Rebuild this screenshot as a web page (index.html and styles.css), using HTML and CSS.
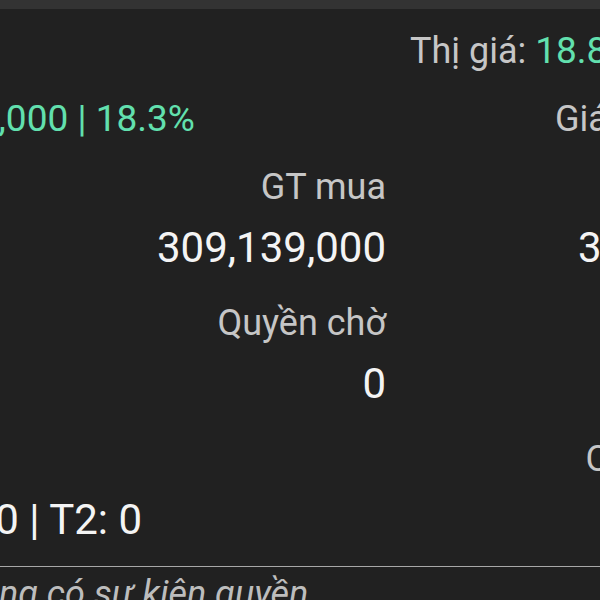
FILE: index.html
```html
<html>
<head>
  <meta charset="utf-8">
  <link rel="stylesheet" href="styles.css">
</head>
<body>
  <div id="topbar"></div>
  <div id="card">
    <div class="price-row">
      <span class="label">Thị giá: </span><span class="up">18.850</span>
    </div>
    <div class="summary-row">
      <span class="gain up">+12,000 | 18.3%</span>
      <span class="label">Giá TB</span>
    </div>
    <div id="stats">
      <div class="cell"></div>
      <div class="cell">
        <div class="label">GT mua</div>
        <div class="value">309,139,000</div>
      </div>
      <div class="cell">
        <div class="label">Lãi</div>
        <div class="value">3.40</div>
      </div>

      <div class="cell"></div>
      <div class="cell">
        <div class="label">Quyền chờ</div>
        <div class="value">0</div>
      </div>
      <div class="cell"></div>

      <div class="cell left">
        <div class="label">&nbsp;</div>
        <div class="value">T1: 0 | T2: 0</div>
      </div>
      <div class="cell"></div>
      <div class="cell">
        <div class="label">Cầm</div>
        <div class="value">&nbsp;</div>
      </div>
    </div>
    <div class="divider"></div>
    <div class="note">Không có sự kiện quyền</div>
  </div>
</body>
</html>
```

FILE: styles.css
```css
body {
  margin: 0;
  padding: 0;
  background-color: #212121;
  font-family: Roboto, "Noto Sans", sans-serif;
  overflow: hidden;
  width: 600px;
  height: 600px;
}

#topbar {
  height: 9px;
  background-color: #333333;
}

#card {
  margin-left: -74px;
  width: 734px;
  padding-top: 18px;
}

.label {
  color: #c6c6c6;
  font-size: 36px;
  line-height: 48px;
  white-space: nowrap;
}

.value {
  color: #f4f4f4;
  font-size: 42px;
  line-height: 56px;
  white-space: nowrap;
}

.up {
  color: #62e0ae;
}

.price-row {
  text-align: right;
  font-size: 37px;
  line-height: 48px;
  white-space: nowrap;
  padding-right: 11px;
}

.summary-row {
  display: flex;
  justify-content: space-between;
  align-items: center;
  margin-top: 16px;
  height: 56px;
}

.gain {
  font-size: 37px;
  line-height: 56px;
  padding-left: 10px;
  white-space: nowrap;
}

#stats {
  display: grid;
  grid-template-columns: 230px 230px 274px;
  row-gap: 23px;
  margin-top: 16px;
}

.cell {
  text-align: right;
  min-height: 113px;
}

.cell .value {
  margin-top: 9px;
}

.cell.left {
  text-align: left;
}

.divider {
  height: 1px;
  background-color: #a8a8a8;
  margin-top: 18px;
}

.note {
  margin-top: 3px;
  padding-left: 12px;
  color: #bdbdbd;
  font-size: 36px;
  font-style: italic;
  line-height: 48px;
  white-space: nowrap;
}
```
